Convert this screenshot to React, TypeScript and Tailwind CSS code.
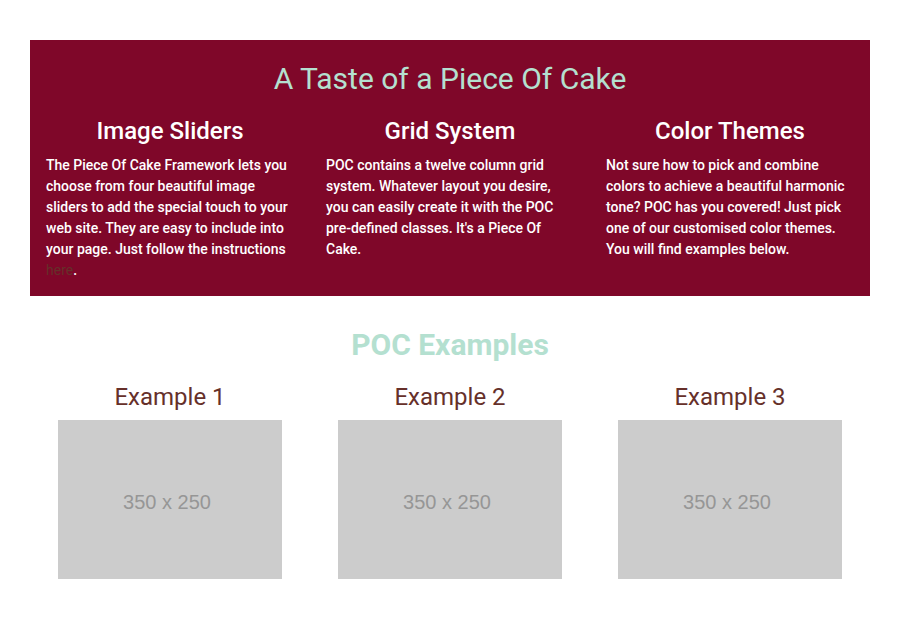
const features = [
  {
    title: 'Image Sliders',
    text: 'The Piece Of Cake Framework lets you choose from four beautiful image sliders to add the special touch to your web site. They are easy to include into your page. Just follow the instructions ',
    link: 'here',
  },
  {
    title: 'Grid System',
    text: "POC contains a twelve column grid system. Whatever layout you desire, you can easily create it with the POC pre-defined classes. It's a Piece Of Cake.",
  },
  {
    title: 'Color Themes',
    text: 'Not sure how to pick and combine colors to achieve a beautiful harmonic tone? POC has you covered! Just pick one of our customised color themes. You will find examples below.',
  },
];

const examples = ['Example 1', 'Example 2', 'Example 3'];

export default function App() {
  return (
    <main className="px-[30px] py-10 font-[Roboto,sans-serif] text-sm leading-[21px]">
      <section className="bg-[#7f0729] py-[15px] text-white">
        <h2 className="text-center text-[30px] leading-[48px] text-[#b4e0d0]">A Taste of a Piece Of Cake</h2>
        <div className="mt-[10px] grid grid-cols-3">
          {features.map((feature) => (
            <article key={feature.title} className="px-4">
              <h3 className="text-center text-2xl leading-9 font-medium">{feature.title}</h3>
              <p className="mt-[6px] font-medium">
                {feature.text}
                {feature.link && (
                  <>
                    <a href="#" className="font-normal text-[#66302a]">{feature.link}</a>.
                  </>
                )}
              </p>
            </article>
          ))}
        </div>
      </section>
      <section className="mt-[25px]">
        <h2 className="text-center text-[30px] leading-[48px] font-bold text-[#b4e0d0]">POC Examples</h2>
        <div className="mt-[10px] grid grid-cols-3">
          {examples.map((title) => (
            <article key={title}>
              <h3 className="text-center text-2xl leading-9 text-[#66302a]">{title}</h3>
              <div className="mx-7 mt-[5px] flex aspect-[224/159] items-center justify-center bg-[#cccccc] pt-1 pr-1.5 font-['Liberation_Sans',sans-serif] text-xl text-[#969696]">
                350 x 250
              </div>
            </article>
          ))}
        </div>
      </section>
    </main>
  );
}
